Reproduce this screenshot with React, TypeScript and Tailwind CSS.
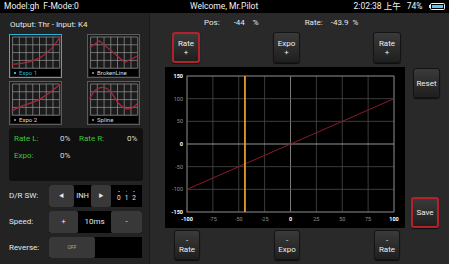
import React from 'react'

const thumbs = [
    { label: 'Expo 1', path: 'M0,29 C22,28 38,22 50,0', selected: true },
    { label: 'BrokenLine', path: 'M0,12 L10,5 L36,27 L50,20', selected: false },
    { label: 'Expo 2', path: 'M0,29 C10,22 20,22 30,16 S45,5 50,1', selected: false },
    { label: 'Spline', path: 'M0,16 C8,0 18,2 25,14 S40,32 50,20', selected: false },
]

function Thumb({ label, path, selected }: { label: string; path: string; selected: boolean }) {
    return (
        <div className={`w-[53px] h-[44px] flex flex-col p-[1px] bg-[#1b1b1b] border ${selected ? 'border-[#2bb3d6]' : 'border-[#5c5c5c]'}`}>
            <svg width="50" height="34" viewBox="0 0 50 34" className="block">
                {[0, 1, 2, 3, 4, 5, 6, 7].map((i) => (
                    <line key={'v' + i} x1={1 + i * 6.9} y1="1" x2={1 + i * 6.9} y2="33" stroke="#9a9a9a" strokeWidth="0.7" />
                ))}
                {[0, 1, 2, 3, 4].map((i) => (
                    <line key={'h' + i} x1="1" y1={1 + i * 8} x2="49" y2={1 + i * 8} stroke="#9a9a9a" strokeWidth="0.7" />
                ))}
                <path d={path} fill="none" stroke="#a8283c" strokeWidth="1.3" />
            </svg>
            <div className="h-[7px] bg-black flex items-center gap-[3px] pl-[3px] text-[6px] leading-none">
                <span className={`w-[2px] h-[2px] ${selected ? 'bg-[#2bb3d6]' : 'bg-[#777]'}`} />
                <span className={selected ? 'text-[#2bb3d6]' : 'text-[#ddd]'}>{label}</span>
            </div>
        </div>
    )
}

function Btn({ top, bottom, red, className }: { top: string; bottom: string; red?: boolean; className: string }) {
    return (
        <div className={`flex flex-col items-center justify-center rounded-[3px] bg-linear-to-b from-[#3a3a3a] to-[#1f1f1f] text-[#eee] text-[8px] leading-[9px] shadow-[0_1px_1px_rgba(0,0,0,0.7)] ${red ? 'border-2 border-[#b3222b]' : 'border border-[#141414]'} ${className}`}>
            <span>{top}</span>
            <span>{bottom}</span>
        </div>
    )
}

const xs = [-100, -75, -50, -25, 0, 25, 50, 75, 100]
const ys = [150, 100, 50, 0, -50, -100, -150]

function Chart() {
    const left = 22
    const top = 9
    const w = 207
    const h = 136
    const px = (v: number) => left + ((v + 100) / 200) * w
    const py = (v: number) => top + ((150 - v) / 300) * h
    const bold = (v: number) => v === -100 || v === 0 || v === 100
    const boldY = (v: number) => v === 150 || v === 0 || v === -150
    return (
        <svg width="240" height="161" viewBox="0 0 240 161" className="block">
            <rect x="0" y="0" width="240" height="161" fill="#000" />
            {xs.map((v) => (
                <line key={'gx' + v} x1={px(v)} y1={top} x2={px(v)} y2={top + h} stroke={v === 0 ? '#9a9a9a' : '#4a4a4a'} strokeWidth="0.8" />
            ))}
            {ys.map((v) => (
                <line key={'gy' + v} x1={left} y1={py(v)} x2={left + w} y2={py(v)} stroke={v === 0 ? '#bdbdbd' : '#4a4a4a'} strokeWidth="0.8" />
            ))}
            <rect x={left} y={top} width={w} height={h} fill="none" stroke="#8a8a8a" strokeWidth="0.8" />
            <line x1={px(-100)} y1={py(-100)} x2={px(100)} y2={py(100)} stroke="#8c1a2a" strokeWidth="1" />
            <line x1={px(-44)} y1={top} x2={px(-44)} y2={top + h} stroke="#f39a1e" strokeWidth="1.6" />
            <line x1={px(-44)} y1={top} x2={px(-44)} y2={top + h} stroke="#ffd08a" strokeWidth="0.4" />
            {ys.map((v) => (
                <text key={'ty' + v} x="18" y={py(v) + 2} textAnchor="end" fontSize="5.5" fontWeight={boldY(v) ? 700 : 400} fill={boldY(v) ? '#fff' : '#8f8f8f'} fontFamily="Roboto, sans-serif">
                    {v}
                </text>
            ))}
            {xs.map((v) => (
                <text key={'tx' + v} x={px(v)} y="154" textAnchor="middle" fontSize="5.5" fontWeight={bold(v) ? 700 : 400} fill={bold(v) ? '#fff' : '#8f8f8f'} fontFamily="Roboto, sans-serif">
                    {v}
                </text>
            ))}
        </svg>
    )
}

export default function App() {
    return (
        <div className="w-[449px] h-[264px] flex flex-col bg-[#292929] text-white overflow-hidden font-['Roboto','Noto_Sans_CJK_SC',sans-serif]">
            {/* status bar */}
            <div className="h-[13px] bg-black flex items-center px-[4px] text-[8.5px] leading-none text-[#f2f2f2] relative">
                <span>Model:gh&nbsp;&nbsp;F-Mode:0</span>
                <span className="absolute left-[190px]">Welcome, Mr.Pilot</span>
                <div className="ml-auto flex items-center gap-[6px]">
                    <span>2:02:38 上午</span>
                    <span>74%</span>
                    <div className="flex items-center">
                        <div className="w-[1.5px] h-[3px] bg-[#cfefff]" />
                        <div className="w-[15px] h-[7px] rounded-[1.5px] border border-[#e8f7ff] p-[1px]">
                            <div className="w-full h-full bg-[#5fc6ee]" />
                        </div>
                    </div>
                </div>
            </div>

            <div className="flex flex-1">
                {/* left panel */}
                <div className="w-[150px] bg-[#232323] border-r border-[#1a1a1a] pl-[9px] flex flex-col">
                    <div className="mt-[7px] h-[10px] text-[8px] leading-[10px] text-[#e6e6e6] pl-[1px]">Output: Thr - Input: K4</div>
                    <div className="mt-[4px] grid grid-cols-[53px_53px] gap-x-[25px] gap-y-[3px]">
                        {thumbs.map((t) => (
                            <Thumb key={t.label} {...t} />
                        ))}
                    </div>
                    <div className="mt-[3px] w-[134px] h-[53px] rounded-[3px] bg-[#101010] px-[5px] pt-[6px] text-[8px] leading-[9px]">
                        <div className="flex">
                            <span className="w-[46px] text-[#3cc63c]">Rate L:</span>
                            <span className="w-[19px] text-[#ddd]">0%</span>
                            <span className="w-[48px] text-[#3cc63c]">Rate R:</span>
                            <span className="text-[#ddd]">0%</span>
                        </div>
                        <div className="flex mt-[8px]">
                            <span className="w-[46px] text-[#3cc63c]">Expo:</span>
                            <span className="text-[#ddd]">0%</span>
                        </div>
                    </div>

                    {/* D/R SW */}
                    <div className="mt-[4px] h-[22px] flex items-center text-[8px] text-[#e6e6e6]">
                        <span className="w-[40px]">D/R SW:</span>
                        <div className="w-[93px] h-full bg-black flex items-center">
                            <div className="w-[25px] h-full bg-[#383838] rounded-[2px] flex items-center justify-center text-[5px]">◀</div>
                            <span className="w-[17px] text-center text-[7.5px]">INH</span>
                            <div className="w-[20px] h-full bg-[#383838] rounded-[2px] flex items-center justify-center text-[5px]">▶</div>
                            <div className="flex-1 flex justify-center gap-[4px] text-[6.5px] leading-none">
                                {['0', '1', '2'].map((n, i) => (
                                    <div key={n} className="flex flex-col items-center gap-[3px]">
                                        <span className={`w-[1.5px] h-[1.5px] rounded-full ${i === 0 ? 'bg-[#3aa8e8]' : 'bg-[#777]'}`} />
                                        <span>{n}</span>
                                    </div>
                                ))}
                            </div>
                        </div>
                    </div>

                    {/* Speed */}
                    <div className="mt-[4px] h-[22px] flex items-center text-[8px] text-[#e6e6e6]">
                        <span className="w-[40px]">Speed:</span>
                        <div className="w-[93px] h-full bg-black flex items-center">
                            <div className="w-[29px] h-full bg-[#383838] rounded-[2px] flex items-center justify-center">+</div>
                            <span className="flex-1 text-center">10ms</span>
                            <div className="w-[31px] h-full bg-[#383838] rounded-[2px] flex items-center justify-center">-</div>
                        </div>
                    </div>

                    {/* Reverse */}
                    <div className="mt-[4px] h-[21px] flex items-center text-[8px] text-[#e6e6e6]">
                        <span className="w-[40px]">Reverse:</span>
                        <div className="w-[93px] h-full bg-black flex items-center">
                            <div className="w-[46px] h-full bg-[#383838] rounded-[2px] flex items-center justify-center text-[5px] text-[#aaa]">OFF</div>
                        </div>
                    </div>
                </div>

                {/* right area */}
                <div className="flex-1 flex flex-col">
                    <div className="h-[19px] flex items-center text-[8px] text-[#e6e6e6]">
                        <span className="ml-[54px]">Pos:</span>
                        <span className="ml-[14px]">-44</span>
                        <span className="ml-[8px]">%</span>
                        <span className="ml-[46px]">Rate:</span>
                        <span className="ml-[8px]">-43.9</span>
                        <span className="ml-[4px]">%</span>
                    </div>
                    <div className="flex">
                        <div className="pl-[15px] flex flex-col">
                            <div className="w-[240px] h-[31px] flex items-stretch justify-between pl-[7px] pr-[4px]">
                                <Btn top="Rate" bottom="+" red className="w-[28px]" />
                                <Btn top="Expo" bottom="+" className="w-[27px]" />
                                <Btn top="Rate" bottom="+" className="w-[28px]" />
                            </div>
                            <div className="mt-[4px]">
                                <Chart />
                            </div>
                            <div className="mt-[2px] w-[240px] h-[30px] flex items-stretch justify-between pl-[9px] pr-[5px]">
                                <Btn top="-" bottom="Rate" className="w-[26px]" />
                                <Btn top="-" bottom="Expo" className="w-[26px]" />
                                <Btn top="-" bottom="Rate" className="w-[26px]" />
                            </div>
                        </div>
                        <div className="flex flex-col">
                            <Btn top="Reset" bottom="" className="mt-[36px] ml-[8px] w-[27px] h-[30px]" />
                            <Btn top="Save" bottom="" red className="mt-[99px] ml-[6px] w-[28px] h-[31px]" />
                        </div>
                    </div>
                </div>
            </div>
        </div>
    )
}
